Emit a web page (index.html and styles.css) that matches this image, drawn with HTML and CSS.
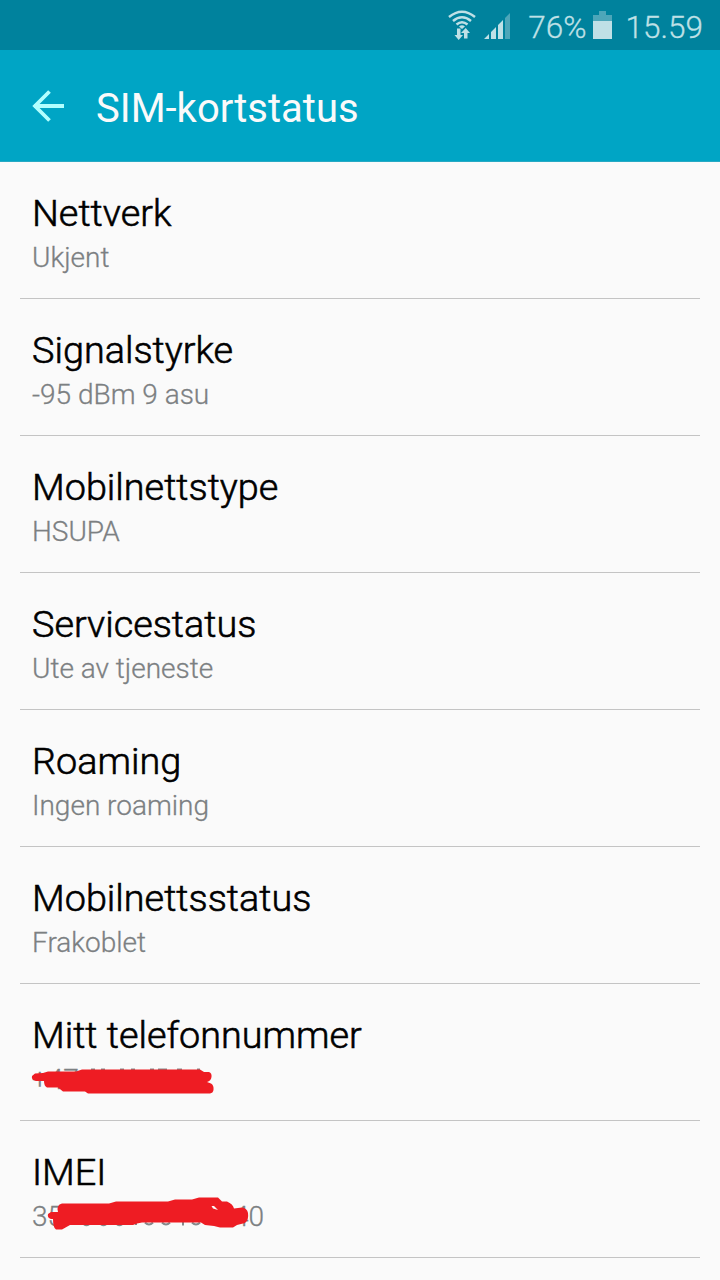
FILE: index.html
```html
<!DOCTYPE html>
<html lang="nb">
<head>
    <meta charset="UTF-8">
    <meta name="viewport" content="width=device-width, initial-scale=1.0">
    <title>SIM-kortstatus</title>
    <link rel="stylesheet" href="styles.css">
</head>
<body>
    <div class="status-bar">
        <svg class="wifi-icon" width="28" height="32" viewBox="0 0 28 32">
            <g fill="none" stroke="#bfe0e6" stroke-width="2.5">
                <path d="M1 7Q14 -3.500 27 7"/>
                <path d="M5 11Q14 3.500 23 11"/>
                <path d="M8.500 14.500Q14 10 19.500 14.500"/>
            </g>
            <path d="M11 16.500Q14 14 17 16.500L14 19Z" fill="#bfe0e6"/>
            <path d="M9 18.500h3.500v6.500h2.500L10.700 30 6.500 25h2.500zM16 28.500v-5.500h-3L17.700 18 22 23h-2.500v5.500z" fill="#bfe0e6"/>
        </svg>
        <svg class="signal-icon" width="27" height="28" viewBox="0 0 27 28">
            <path d="M0 27L5 22V27ZM7 20L12 15V27H7ZM14 13L19 8V27H14Z" fill="#bfe0e6"/>
            <path d="M21 6L26 1V27H21Z" fill="#4da6b9"/>
        </svg>
        <span class="battery-level">76%</span>
        <svg class="battery-icon" width="19" height="28" viewBox="0 0 19 28">
            <path d="M6 0h7v4h6v6H0V4h6z" fill="#4da6b9"/>
            <path d="M0 10h19v18H0z" fill="#bfe0e6"/>
        </svg>
        <span class="clock">15.59</span>
    </div>

    <header class="app-bar">
        <svg class="back-icon" width="32" height="32" viewBox="0 0 32 32">
            <path d="M17.500 1.500L3 16L17.500 30.500M2 16H32" fill="none" stroke="#b2ffff" stroke-width="3.800"/>
        </svg>
        <h1 class="app-title">SIM-kortstatus</h1>
    </header>

    <main class="status-list">
        <div class="item">
            <h2 class="item-title">Nettverk</h2>
            <p class="item-value">Ukjent</p>
        </div>
        <div class="item">
            <h2 class="item-title">Signalstyrke</h2>
            <p class="item-value">-95 dBm 9 asu</p>
        </div>
        <div class="item">
            <h2 class="item-title">Mobilnettstype</h2>
            <p class="item-value">HSUPA</p>
        </div>
        <div class="item">
            <h2 class="item-title">Servicestatus</h2>
            <p class="item-value">Ute av tjeneste</p>
        </div>
        <div class="item">
            <h2 class="item-title">Roaming</h2>
            <p class="item-value">Ingen roaming</p>
        </div>
        <div class="item">
            <h2 class="item-title">Mobilnettsstatus</h2>
            <p class="item-value">Frakoblet</p>
        </div>
        <div class="item">
            <h2 class="item-title">Mitt telefonnummer</h2>
            <p class="item-value masked">+47
                <svg class="scribble phone-scribble" width="240" height="40" viewBox="20 1060 240 40">
                    <path d="M91 1069.500h4M101 1069.500h4M120 1069.500h4M131 1069.500h4M150 1069.500h4M158 1069.500h9M177 1069.500h5M197 1069.500h3" stroke="#85898b" stroke-width="2"/>
                    <path d="M35 1073.500L43 1073L48 1071.500H76L82 1069.500H200L204 1072L209 1072Q212 1073 211.500 1077Q211 1081 207 1082L211 1083.500Q214 1085 213.500 1090Q213 1093 210 1093.500H88L85 1091.500H63L58 1087.500H47Q44 1086 44 1081H36Q31 1080 32 1076Z" fill="#ee1c23"/>
                </svg>
            </p>
        </div>
        <div class="item">
            <h2 class="item-title">IMEI</h2>
            <p class="item-value masked">35<span class="last-digits">40</span>
                <svg class="scribble imei-scribble" width="240" height="50" viewBox="20 1190 240 50">
                    <path d="M84 1224.500q2.500 1.500 5 0M101 1224.500q2.500 1.500 5 0M117 1224.500q2.500 1.500 5 0M136 1223v2M145 1222.500q4 4 8 0M162 1222.500q4 4 8 0M183 1222v3.500M192 1222.500q4 4 8 0" fill="none" stroke="#85898b" stroke-width="2"/>
                    <path fill-rule="evenodd" d="M62 1203.500H109L116 1201.500H168L175 1199.500H192L199 1197.500H218L222 1201.500H227Q233 1204 234 1208.500L242 1207.500Q247 1208 248 1213Q249 1220 245 1223L237 1225L233 1227.500H220L214 1226L205 1225L201 1222.500H142L137 1223.500L133 1225H70L62 1229.500H56Q53 1228 53 1219H51Q47 1218 48 1214L51 1212H58Q56 1205 62 1203.500ZM211.500 1206L214 1206L218 1210L213 1208.500Z" fill="#ee1c23"/>
                </svg>
            </p>
        </div>
    </main>
</body>
</html>
```

FILE: styles.css
```css
* {
    margin: 0;
    padding: 0;
    box-sizing: border-box;
}

body {
    height: 1280px;
    overflow: hidden;
    background-color: #fafafa;
    font-family: Roboto, sans-serif;
}

.status-bar {
    display: flex;
    justify-content: flex-end;
    height: 50px;
    padding-right: 17px;
    background-color: #00829d;
    color: #bfe0e6;
    font-size: 31.5px;
    font-weight: 300;
    line-height: 55px;
    -webkit-text-stroke: 0.3px;
}

.wifi-icon {
    margin: 10px 8px 0 0;
}

.signal-icon {
    margin: 12px 17px 0 0;
}

.battery-icon {
    margin: 11px 14px 0 6px;
}

.app-bar {
    display: flex;
    align-items: center;
    gap: 32px;
    height: 112px;
    padding-left: 32px;
    background-color: #00a5c5;
    border-bottom: 1px solid #27a9c3;
}

.app-title {
    padding-top: 7px;
    color: #fafafa;
    font-size: 40px;
    font-weight: 400;
    line-height: 48px;
}

.status-list {
    padding: 0 20px;
}

.item {
    height: 137px;
    padding: 28px 12px 0;
    border-bottom: 1px solid #c4c4c4;
}

.item-title {
    color: #000;
    font-size: 37.8px;
    font-weight: 300;
    line-height: 46px;
    -webkit-text-stroke: 0.6px;
}

.item-value {
    color: #7c8082;
    font-size: 28px;
    font-weight: 300;
    line-height: 44px;
    -webkit-text-stroke: 0.3px;
}

.masked {
    position: relative;
}

.last-digits {
    margin-left: 170px;
}

/* Red marker strokes lie over the private numbers */
.scribble {
    position: absolute;
    left: -12px;
}

.phone-scribble {
    top: 2px;
}

.imei-scribble {
    top: -5px;
}
```
